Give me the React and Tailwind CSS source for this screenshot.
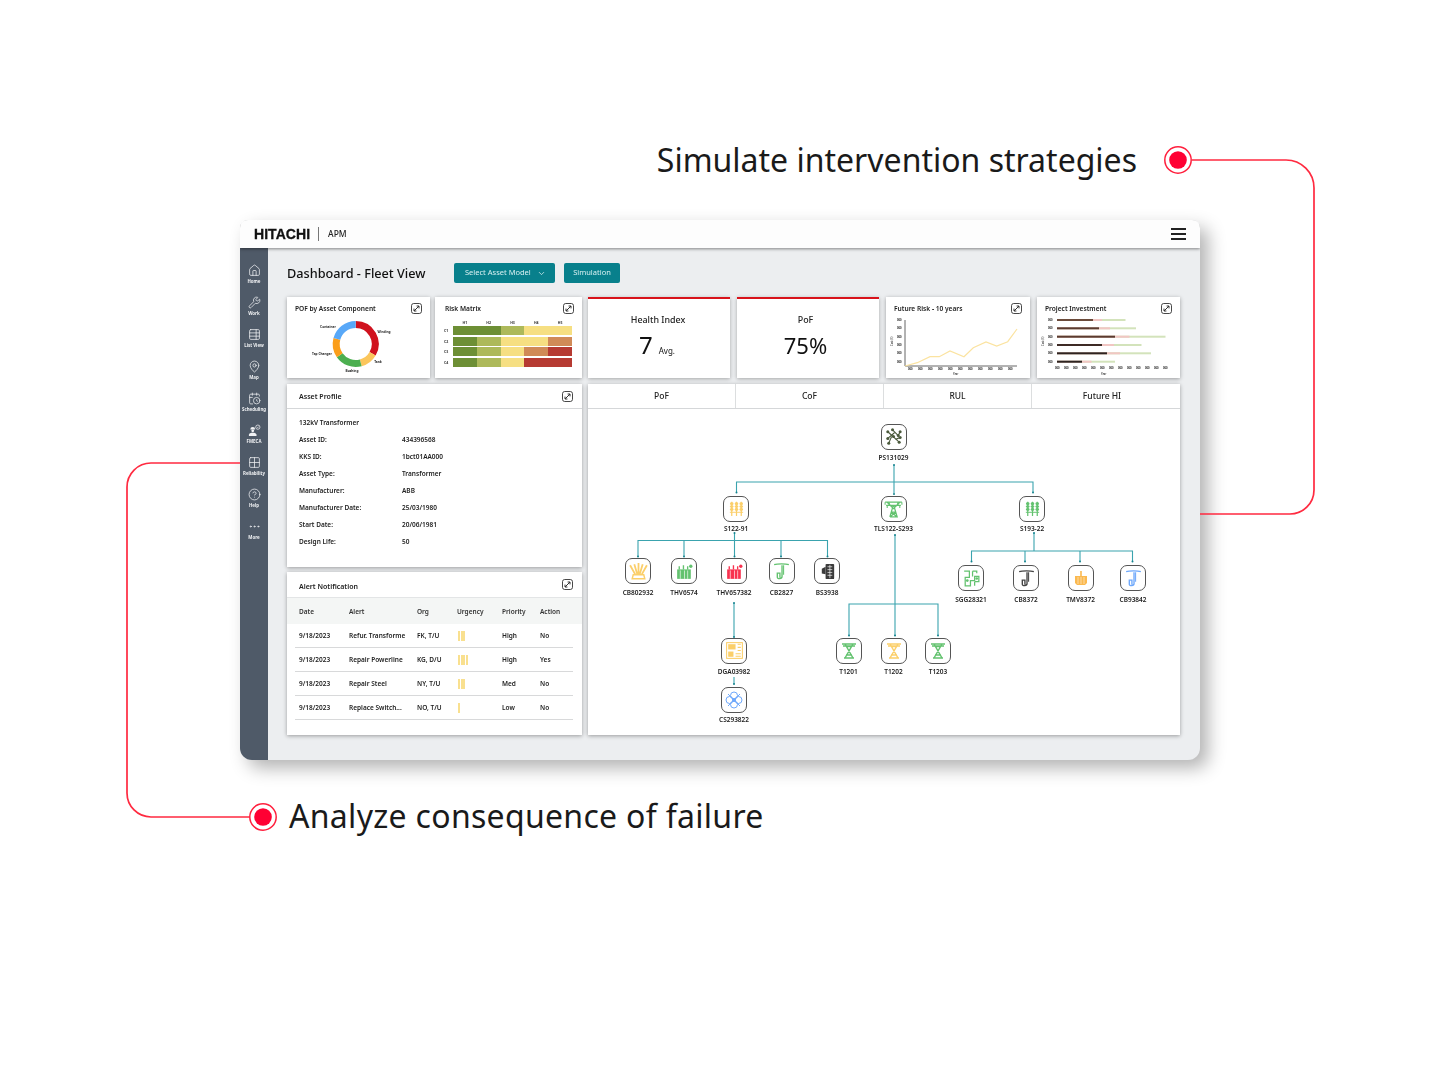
import { House, Wrench, TableProperties, MapPin, CalendarClock, Grid2x2, CircleHelp, Ellipsis, ChevronDown } from 'lucide-react'

function FmecaIcon({ size }) {
  return (
    <svg width={size} height={size} viewBox="0 0 14 14" fill="currentColor">
      <path d="M2.5 5.8A2.6 2.6 0 0 1 7.7 5.8Z" />
      <circle cx="5.1" cy="7.4" r="1.5" />
      <path d="M1 13V11.6C1 10 3 9.4 5.1 9.4S9.2 10 9.2 11.6V13Z" />
      <circle cx="10.6" cy="3.4" r="2.3" fill="none" stroke="currentColor" strokeWidth="0.8" />
      <path d="M9.7 3.4L10.4 4.1L11.5 2.8" fill="none" stroke="currentColor" strokeWidth="0.7" />
    </svg>
  )
}

const NAV = [
  { label: 'Home', icon: House },
  { label: 'Work', icon: Wrench },
  { label: 'List View', icon: TableProperties },
  { label: 'Map', icon: MapPin },
  { label: 'Scheduling', icon: CalendarClock },
  { label: 'FMECA', icon: FmecaIcon },
  { label: 'Reliability', icon: Grid2x2 },
  { label: 'Help', icon: CircleHelp },
  { label: 'More', icon: Ellipsis },
]

const PROFILE = [
  ['Asset ID:', '434396568'],
  ['KKS ID:', '1bct01AA000'],
  ['Asset Type:', 'Transformer'],
  ['Manufacturer:', 'ABB'],
  ['Manufacturer Date:', '25/03/1980'],
  ['Start Date:', '20/06/1981'],
  ['Design Life:', '50'],
]

const ALERTS = [
  { date: '9/18/2023', alert: 'Refur. Transforme', org: 'FK, T/U', urgency: 3, priority: 'High', action: 'No' },
  { date: '9/18/2023', alert: 'Repair Powerline', org: 'KG, D/U', urgency: 4, priority: 'High', action: 'Yes' },
  { date: '9/18/2023', alert: 'Repair Steel', org: 'NY, T/U', urgency: 3, priority: 'Med', action: 'No' },
  { date: '9/18/2023', alert: 'Replace Switch...', org: 'NO, T/U', urgency: 1, priority: 'Low', action: 'No' },
]

const RISK = [
  ['#6d8f35', '#6d8f35', '#adb95a', '#f6df82', '#f6df82'],
  ['#6d8f35', '#adb95a', '#f6df82', '#f6df82', '#d08a57'],
  ['#6d8f35', '#adb95a', '#f6df82', '#d08a57', '#b63a32'],
  ['#6d8f35', '#adb95a', '#f6df82', '#b63a32', '#b63a32'],
]

const TREE = [
  { id: 'PS131029', x: 893.5, y: 436.5, ly: 457.5, kind: 'network', color: '#4b5a3c' },
  { id: 'S122-91', x: 736, y: 508.5, ly: 528.5, kind: 'substation', color: '#fbcf6a' },
  { id: 'TLS122-S293', x: 893.5, y: 508.5, ly: 528.5, kind: 'pylon', color: '#63c26f' },
  { id: 'S193-22', x: 1032, y: 508.5, ly: 528.5, kind: 'substation', color: '#63c26f' },
  { id: 'CB802932', x: 638, y: 571, ly: 592.5, kind: 'crown', color: '#fbcf6a' },
  { id: 'THV6574', x: 684, y: 571, ly: 592.5, kind: 'transformer', color: '#63c26f' },
  { id: 'THV657382', x: 734, y: 571, ly: 592.5, kind: 'transformer', color: '#f8324f' },
  { id: 'CB82827', label: 'CB2827', x: 781.5, y: 571, ly: 592.5, kind: 'breaker', color: '#63c26f' },
  { id: 'BS3938', x: 827, y: 571, ly: 592.5, kind: 'building', color: '#3b3b3b' },
  { id: 'SGG28321', x: 971, y: 578, ly: 599.5, kind: 'circuit', color: '#63c26f' },
  { id: 'CB8372', x: 1026, y: 578, ly: 599.5, kind: 'breaker', color: '#444444' },
  { id: 'TMV8372', x: 1080.5, y: 578, ly: 599.5, kind: 'tank', color: '#fbb94f' },
  { id: 'CB93842', x: 1133, y: 578, ly: 599.5, kind: 'breaker', color: '#6ea8fb' },
  { id: 'DGA03982', x: 734, y: 650.5, ly: 671.5, kind: 'panel', color: '#fbcf6a' },
  { id: 'CS293822', x: 734, y: 699.5, ly: 719.5, kind: 'flower', color: '#6ea8fb' },
  { id: 'T1201', x: 848.5, y: 650.5, ly: 671.5, kind: 'tower', color: '#63c26f' },
  { id: 'T1202', x: 893.5, y: 650.5, ly: 671.5, kind: 'tower', color: '#fbcf6a' },
  { id: 'T1203', x: 938, y: 650.5, ly: 671.5, kind: 'tower', color: '#63c26f' },
]

// page coordinates, the svg viewBox below starts at the panel's corner
const LINKS = [
  'M894 465V493', 'M736.5 492V482H1033V492',
  'M734.5 533V556', 'M638 556V540.5H827.5V556', 'M684 540.5V556', 'M781 540.5V556',
  'M895 535V636', 'M849 635V604H938V635',
  'M1034 533V551', 'M971.5 561V551H1132.5V561', 'M1025 551V561', 'M1080 551V561',
  'M734 603V637', 'M734 677V684',
]

const DOTS = [
  [894, 465], [894, 494], [736.5, 492.5], [1033, 492.5], [734.5, 533], [638, 556.5], [684, 556.5], [734.5, 556.5],
  [781, 556.5], [827.5, 556.5], [895, 535], [849, 635.5], [895, 635.5], [938, 635.5], [1034, 533], [971.5, 561.5],
  [1025, 561.5], [1080, 561.5], [1132.5, 561.5], [734, 603], [734, 637], [734, 684],
]

const RISK_LINE = '905,366 917.3,362.7 930,356.7 939.3,356.7 950,351 964,356.7 973.3,347.7 986,342 996.7,346 1007.7,341.7 1017,329'

const INVEST = [
  { y: 320, dark: 1093, pink: 1102, green: 1125.5, fill: '#6b4a3a' },
  { y: 328.3, dark: 1099, pink: 1110, green: 1136, fill: '#5a3b30' },
  { y: 336.7, dark: 1115, pink: 1129.5, green: 1165.5, fill: '#5a3b30' },
  { y: 345, dark: 1102, pink: 1114, green: 1141.5, fill: '#3d2a25' },
  { y: 353.3, dark: 1107, pink: 1120, green: 1151, fill: '#2e2421' },
  { y: 361.7, dark: 1082, pink: 1091.5, green: 1115, fill: '#2e2421' },
]

function ExpandIcon() {
  return (
    <svg width="11" height="11" viewBox="0 0 11 11" fill="none" stroke="#333" className="shrink-0">
      <rect x="0.5" y="0.5" width="10" height="10" rx="2.2" strokeWidth="0.9" />
      <path d="M3 8L8 3M5.6 3H8V5.4M3 5.6V8H5.4" strokeWidth="1" />
    </svg>
  )
}

function NodeIcon({ kind, color }) {
  const line = { stroke: color, strokeWidth: 1, fill: 'none' }
  switch (kind) {
    case 'network':
      return (
        <svg viewBox="0 0 20 20" className="w-[19px] h-[19px]">
          <path d="M4 5L16 16M4 12L11 6M9 3L15 9M8 10L5 17M15 9L17 5M12 13L17 11" stroke={color} strokeWidth="1.2" />
          {[[4, 5], [4, 12], [9, 3], [15, 9], [17, 5], [5, 17], [16, 16], [17, 11], [10, 10]].map(([cx, cy]) => (
            <circle key={`${cx}-${cy}`} cx={cx} cy={cy} r="1.6" fill={color} />
          ))}
        </svg>
      )
    case 'substation':
      return (
        <svg viewBox="0 0 20 20" className="w-[19px] h-[19px]">
          {[5, 10, 15].map((x) => (
            <g key={x}>
              <path d={`M${x} 3V18`} stroke={color} strokeWidth="1.3" />
              <ellipse cx={x} cy="5" rx="1.9" ry="1.5" fill={color} />
              <ellipse cx={x} cy="8" rx="1.9" ry="1.5" fill={color} />
              <ellipse cx={x} cy="11" rx="1.9" ry="1.5" fill={color} />
            </g>
          ))}
          <path d="M3 14H17" {...line} />
        </svg>
      )
    case 'pylon':
      return (
        <svg viewBox="0 0 20 20" className="w-[21px] h-[21px]">
          <path d="M2 4H18M3 7H17M4 4L10 10L16 4M6.5 18L9.5 8H10.5L13.5 18H6.5M8 13.5H12M8 13.5L13.5 18M12 13.5L6.5 18" stroke={color} strokeWidth="1.2" fill="none" />
          <path d="M2 4V6.5M6 4V6.5M14 4V6.5M18 4V6.5M4 7V9.5M16 7V9.5" {...line} />
        </svg>
      )
    case 'tower':
      return (
        <svg viewBox="0 0 20 20" className="w-[20px] h-[20px]">
          <path d="M3 3H17M4 5H16M6 3L14 17M14 3L6 17M5 17H15M7.5 5.5L12.5 5.5M7 14H13" stroke={color} strokeWidth="1.5" fill="none" />
        </svg>
      )
    case 'crown':
      return (
        <svg viewBox="0 0 20 20" className="w-[21px] h-[21px]">
          <path d="M2 4L7 13M18 4L13 13M6 3L9 13M14 3L11 13M10 2V13" stroke={color} strokeWidth="1.7" fill="none" />
          <path d="M5 13H15L16 17H4Z" fill="none" stroke={color} strokeWidth="1.4" />
        </svg>
      )
    case 'transformer':
      return (
        <svg viewBox="0 0 20 20" className="w-[21px] h-[21px]">
          <rect x="3" y="8" width="13" height="9" fill={color} />
          <path d="M5 8V5M9 8V4M13 8V5" stroke={color} strokeWidth="1.3" />
          <circle cx="16" cy="5" r="1.6" fill={color} />
          <path d="M6 9V17M10 9V17M13 9V17" stroke="#fff" strokeWidth="0.6" />
        </svg>
      )
    case 'breaker':
      return (
        <svg viewBox="0 0 20 20" className="w-[21px] h-[21px]">
          <path d="M3 3.5C6 2.5 14 2.5 17 3.5M10.5 4V15C10.5 17 6 17.5 6 15.5V11.5H8.5V16" stroke={color} strokeWidth="1.3" fill="none" />
          <path d="M12 4V13" stroke={color} strokeWidth="1" />
        </svg>
      )
    case 'building':
      return (
        <svg viewBox="0 0 20 20" className="w-[19px] h-[19px]">
          <rect x="8" y="2" width="9" height="16" rx="1" fill={color} />
          <path d="M4 7L8 5V13L4 12Z" fill={color} />
          <path d="M10 5H15M10 8H15M10 11H15M10 14H15M12.5 3V17" stroke="#fff" strokeWidth="0.7" />
        </svg>
      )
    case 'circuit':
      return (
        <svg viewBox="0 0 20 20" className="w-[21px] h-[21px]">
          <path d="M3 3H8V9H4V17H9V12H13V8H17V13H13M11 3H15V5M11 3V8M13 17V13" stroke={color} strokeWidth="1.2" fill="none" />
          <circle cx="6" cy="12" r="1.3" fill={color} />
          <circle cx="15" cy="10" r="1.3" fill={color} />
        </svg>
      )
    case 'tank':
      return (
        <svg viewBox="0 0 20 20" className="w-[20px] h-[20px]">
          <path d="M4 8H16V15L14 17H6L4 15Z" fill={color} />
          <path d="M10 3V8" stroke={color} strokeWidth="1.6" />
          <path d="M7 9V16M10 9V16M13 9V16" stroke="#fff" strokeWidth="0.5" />
        </svg>
      )
    case 'panel':
      return (
        <svg viewBox="0 0 20 20" className="w-[21px] h-[21px]">
          <rect x="2.5" y="2.5" width="15" height="15" fill="none" stroke={color} strokeWidth="1" />
          <rect x="4" y="4" width="7" height="5" fill={color} />
          <rect x="4" y="11" width="5" height="5" fill={color} />
          <path d="M13 4H16M13 7H16M13 10H16M11 13H16M11 15.5H16" stroke={color} strokeWidth="1" />
        </svg>
      )
    case 'flower':
      return (
        <svg viewBox="0 0 20 20" className="w-[20px] h-[20px]">
          <g fill="none" stroke={color} strokeWidth="1">
            <ellipse cx="10" cy="5.5" rx="3.5" ry="3.5" />
            <ellipse cx="10" cy="14.5" rx="3.5" ry="3.5" />
            <ellipse cx="5.5" cy="10" rx="3.5" ry="3.5" />
            <ellipse cx="14.5" cy="10" rx="3.5" ry="3.5" />
            <path d="M4 4L16 16M16 4L4 16" />
          </g>
          <circle cx="10" cy="10" r="2" fill={color} />
        </svg>
      )
    default:
      return null
  }
}

function TreeNode({ node }) {
  return (
    <div className="absolute flex flex-col items-center w-[70px]" style={{ left: node.x - 588 - 35, top: node.y - 409 - 13 }}>
      <div className="w-[26px] h-[26px] rounded-[7px] border border-[#555] bg-white flex items-center justify-center">
        <NodeIcon kind={node.kind} color={node.color} />
      </div>
      <div className="absolute text-[6.5px] leading-[8px] font-semibold text-[#222] whitespace-nowrap" style={{ top: node.ly - node.y + 13 - 4 }}>
        {node.label || node.id}
      </div>
    </div>
  )
}

function Card({ width, title, children }) {
  return (
    <div className="relative bg-white shadow-[0_1px_4px_rgba(0,0,0,0.35)] h-full" style={{ width }}>
      <div className="flex items-center justify-between pl-[8px] pr-[8px] pt-[6px]">
        <span className="text-[6.6px] leading-[11px] font-semibold text-[#222]">{title}</span>
        <ExpandIcon />
      </div>
      {children}
    </div>
  )
}

function StatCard({ title, className, children }) {
  return (
    <div className={`w-[142px] h-full bg-white border-t-[2px] border-[#d8131b] shadow-[0_1px_4px_rgba(0,0,0,0.3)] flex flex-col items-center ${className}`}>
      <div className="mt-[14px] text-[8.9px] leading-[14px] font-medium text-[#222]">{title}</div>
      <div className="mt-[3px] flex items-baseline text-[#111]">{children}</div>
    </div>
  )
}

function Donut() {
  const segs = [
    { color: '#d0121e', from: 0, to: 120 },
    { color: '#fbc65c', from: 120, to: 165 },
    { color: '#4caf50', from: 165, to: 235 },
    { color: '#fb9e1a', from: 235, to: 285 },
    { color: '#58a8f8', from: 285, to: 360 },
  ]
  const r = 19.5
  const pt = (a) => {
    const t = ((a - 90) * Math.PI) / 180
    return `${(68.7 + r * Math.cos(t)).toFixed(2)} ${(47 + r * Math.sin(t)).toFixed(2)}`
  }
  return (
    <svg viewBox="0 0 143 81" className="absolute inset-0 w-full h-full">
      {segs.map((s) => (
        <path key={s.color} d={`M${pt(s.from)}A${r} ${r} 0 ${s.to - s.from > 180 ? 1 : 0} 1 ${pt(s.to)}`} fill="none" stroke={s.color} strokeWidth="7" />
      ))}
      <g fontSize="3.2" fontWeight="700" fill="#222" textAnchor="middle">
        <text x="41" y="31">Container</text>
        <text x="97" y="36">Winding</text>
        <text x="35" y="57.5">Tap Changer</text>
        <text x="91" y="66">Tank</text>
        <text x="65" y="74.5">Bushing</text>
      </g>
    </svg>
  )
}

function RiskChart() {
  const ys = [320, 328.3, 336.7, 345, 353.3, 361.7]
  const xs = [908, 918, 928, 938, 948, 958, 968, 978, 988, 998, 1008]
  return (
    <svg viewBox="886 297 144 81" className="absolute inset-0 w-full h-full">
      <path d="M905 320V366H1017" fill="none" stroke="#555" strokeWidth="0.9" />
      <polyline points={RISK_LINE} fill="none" stroke="#fbe3a0" strokeWidth="1.2" />
      <g fontSize="2.6" fontWeight="700" fill="#222">
        {ys.map((y) => <text key={y} x="897" y={y + 1}>000</text>)}
        {xs.map((x) => <text key={x} x={x} y="370">000</text>)}
        <text x="953" y="375" fontWeight="500">Year</text>
        <text x="0" y="0" fontWeight="500" transform="translate(893 346) rotate(-90)">Cost ($)</text>
      </g>
    </svg>
  )
}

function InvestChart() {
  const xs = [1057, 1066, 1075, 1084, 1093, 1102, 1111, 1120, 1129, 1138, 1147, 1156, 1165]
  return (
    <svg viewBox="1037 297 143 81" className="absolute inset-0 w-full h-full">
      {INVEST.map((b) => (
        <g key={b.y}>
          <rect x="1057" y={b.y - 1} width={b.green - 1057} height="2" fill="#d3e3bb" />
          <rect x="1057" y={b.y - 1} width={b.pink - 1057} height="2" fill="#f1c6c3" />
          <rect x="1057" y={b.y - 1} width={b.dark - 1057} height="2" fill={b.fill} />
        </g>
      ))}
      <g fontSize="2.6" fontWeight="700" fill="#222">
        {INVEST.map((b) => <text key={b.y} x="1048" y={b.y + 1}>000</text>)}
        {xs.map((x) => <text key={x} x={x - 2} y="369">000</text>)}
        <text x="1101" y="375" fontWeight="500">Year</text>
        <text x="0" y="0" fontWeight="500" transform="translate(1044 346) rotate(-90)">Cost ($)</text>
      </g>
    </svg>
  )
}

function Callouts() {
  const dot = (cx, cy) => (
    <g>
      <circle cx={cx} cy={cy} r="13.2" fill="#fff" stroke="#ff1f3d" strokeWidth="1.5" />
      <circle cx={cx} cy={cy} r="8.8" fill="#ff0033" />
    </g>
  )
  return (
    <svg viewBox="0 0 1440 1080" className="absolute inset-0 w-full h-full pointer-events-none" fill="none">
      <path d="M1192 160H1286A28 28 0 0 1 1314 188V490A24 24 0 0 1 1290 514H1200" stroke="#ff2a40" strokeWidth="1.7" />
      <path d="M240 463H151A24 24 0 0 0 127 487V793A24 24 0 0 0 151 817H250" stroke="#ff2a40" strokeWidth="1.7" />
      {dot(1178, 160)}
      {dot(263, 817)}
    </svg>
  )
}

export default function App() {
  return (
    <div className="relative w-[1440px] h-[1080px] bg-white overflow-hidden font-['Noto_Sans',sans-serif]">
      <h2 className="pt-[140px] pr-[303px] text-right text-[32px] leading-[40px] font-normal text-[#1a1a1a]">
        Simulate intervention strategies
      </h2>

      <div className="mt-[40px] ml-[240px] w-[960px] h-[540px] rounded-t-[8px] rounded-b-[12px] overflow-hidden bg-[#eceef0] shadow-[8px_8px_18px_rgba(0,0,0,0.3)] flex flex-col blur-[0.3px]">
        <header className="relative z-10 h-[28px] shrink-0 bg-[#fdfdfd] shadow-[0_1px_3px_rgba(0,0,0,0.45)] flex items-center pl-[14px] pr-[14px]">
          <span className="font-['Liberation_Sans',sans-serif] font-black text-[14px] tracking-[0.05px] text-[#111] [-webkit-text-stroke:0.3px_#111]">HITACHI</span>
          <span className="ml-[8px] w-px h-[14px] bg-[#777]" />
          <span className="ml-[9px] text-[8.5px] font-medium text-[#222]">APM</span>
          <span className="ml-auto flex flex-col gap-[3px]">
            <span className="block w-[15px] h-[2px] bg-[#222]" />
            <span className="block w-[15px] h-[2px] bg-[#222]" />
            <span className="block w-[15px] h-[2px] bg-[#222]" />
          </span>
        </header>

        <div className="flex flex-1">
          <nav className="w-[28px] shrink-0 bg-[#4f5a68] pt-[16px] flex flex-col">
            {NAV.map((item) => (
              <div key={item.label} className="h-[32px] flex flex-col items-center text-[#f1f2f4]">
                <item.icon size={13} strokeWidth={1.4} />
                <span className="mt-[0.5px] text-[4.4px] leading-[6px] font-bold whitespace-nowrap">{item.label}</span>
              </div>
            ))}
          </nav>

          <main className="flex-1 pl-[19px]">
            <div className="mt-[15px] mb-[14px] h-[20px] flex items-center">
              <h1 className="w-[167px] pt-[1px] text-[12.7px] font-medium text-[#111] whitespace-nowrap">Dashboard - Fleet View</h1>
              <button className="w-[101px] h-[20px] rounded-[2px] bg-[#08808c] text-[#d9f0f2] text-[7.5px] flex items-center pl-[11px]">
                Select Asset Model
                <ChevronDown size={9} className="ml-[6px]" />
              </button>
              <button className="ml-[9px] w-[56px] h-[20px] rounded-[2px] bg-[#08808c] text-[#d9f0f2] text-[7.5px]">
                Simulation
              </button>
            </div>

            <div className="h-[81px] flex">
              <Card width={143} title="POF by Asset Component"><Donut /></Card>
              <div className="ml-[5px] h-full">
                <Card width={147} title={<span className="ml-[2px]">Risk Matrix</span>}>
                  <div className="relative ml-[18px] mr-[10px] mt-[5px]">
                    <div className="grid grid-cols-5 h-[7px] text-[3.5px] leading-[7px] font-bold text-[#333] text-center">
                      {['H1', 'H2', 'H3', 'H4', 'H5'].map((c) => <span key={c}>{c}</span>)}
                    </div>
                    <div className="flex flex-col gap-[1.5px]">
                      {RISK.map((row, i) => (
                        <div key={i} className="relative grid grid-cols-5 h-[9px]">
                          <span className="absolute left-[-9px] text-[3.5px] leading-[9px] font-bold text-[#333]">{`C${i + 1}`}</span>
                          {row.map((c, j) => <span key={j} style={{ background: c }} />)}
                        </div>
                      ))}
                    </div>
                  </div>
                </Card>
              </div>
              <div className="ml-[6px] h-full">
                <StatCard title="Health Index" className="pr-[2px]">
                  <span className="text-[24px] leading-[30px] -ml-[2px]">7</span>
                  <span className="ml-[6px] text-[8px]">Avg.</span>
                </StatCard>
              </div>
              <div className="ml-[7px] h-full">
                <StatCard title="PoF" className="pr-[5px]">
                  <span className="text-[22px] leading-[30px]">75%</span>
                </StatCard>
              </div>
              <div className="ml-[7px] h-full"><Card width={144} title="Future Risk - 10 years"><RiskChart /></Card></div>
              <div className="ml-[7px] h-full"><Card width={143} title="Project Investment"><InvestChart /></Card></div>
            </div>

            <div className="mt-[6px] h-[351px] flex">
              <div className="w-[295px] flex flex-col gap-[5px]">
                <section className="h-[183px] bg-white shadow-[0_1px_4px_rgba(0,0,0,0.35)]">
                  <div className="h-[25px] border-b border-[#d5d7d9] flex items-center justify-between pl-[12px] pr-[9px]">
                    <span className="text-[7px] font-semibold text-[#222] pt-[2px]">Asset Profile</span>
                    <ExpandIcon />
                  </div>
                  <div className="pl-[12px] pt-[5px] text-[6.5px] font-semibold text-[#222]">
                    <div className="h-[17px] leading-[17px]">132kV Transformer</div>
                    {PROFILE.map(([k, v]) => (
                      <div key={k} className="h-[17px] leading-[17px] flex">
                        <span className="w-[103px]">{k}</span>
                        <span>{v}</span>
                      </div>
                    ))}
                  </div>
                </section>

                <section className="h-[163px] bg-white shadow-[0_1px_4px_rgba(0,0,0,0.35)]">
                  <div className="h-[26px] border-b border-[#e3e5e6] flex items-center justify-between pl-[12px] pr-[9px]">
                    <span className="text-[7px] font-semibold text-[#222] pt-[5px]">Alert Notification</span>
                    <ExpandIcon />
                  </div>
                  <div className="h-[26px] bg-[#f4f6f5] pl-[12px] pt-[2px] grid grid-cols-[50px_68px_40px_45px_38px_1fr] items-center text-[6.5px] font-semibold text-[#333]">
                    <span>Date</span><span>Alert</span><span>Org</span><span>Urgency</span><span>Priority</span><span>Action</span>
                  </div>
                  <div className="ml-[8px] w-[278px]">
                    {ALERTS.map((a) => (
                      <div key={a.alert} className="h-[24px] border-b border-[#d8d9da] pl-[4px] pt-[1px] grid grid-cols-[50px_68px_40px_45px_38px_1fr] items-center text-[6.5px] font-semibold text-[#222]">
                        <span>{a.date}</span>
                        <span className="whitespace-nowrap">{a.alert}</span>
                        <span>{a.org}</span>
                        <span className="flex gap-[0.5px] pl-[1px]">
                          {Array.from({ length: a.urgency }).map((_, i) => <span key={i} className="block w-[2px] h-[10px] bg-[#f9e08f]" />)}
                        </span>
                        <span>{a.priority}</span>
                        <span>{a.action}</span>
                      </div>
                    ))}
                  </div>
                </section>
              </div>

              <section className="ml-[6px] w-[592px] bg-white shadow-[0_1px_4px_rgba(0,0,0,0.35)] flex flex-col">
                <div className="h-[25px] border-b border-[#d5d7d9] grid grid-cols-4 text-[8.5px] font-medium text-[#222]">
                  <div className="flex items-center justify-center pt-[1px] border-r border-[#dcdedf]">PoF</div>
                  <div className="flex items-center justify-center pt-[1px] border-r border-[#dcdedf]">CoF</div>
                  <div className="flex items-center justify-center pt-[1px] border-r border-[#dcdedf]">RUL</div>
                  <div className="flex items-center justify-center pt-[1px] pr-[8px]">Future HI</div>
                </div>
                <div className="relative flex-1">
                  <svg viewBox="588 409 592 326" className="absolute inset-0 w-full h-full" fill="none">
                    {LINKS.map((d) => <path key={d} d={d} stroke="#3aa3ae" strokeWidth="1.1" />)}
                    {DOTS.map(([cx, cy]) => <circle key={`${cx}-${cy}`} cx={cx} cy={cy} r="1" fill="#14838f" />)}
                  </svg>
                  {TREE.map((n) => <TreeNode key={n.id} node={n} />)}
                </div>
              </section>
            </div>
          </main>
        </div>
      </div>

      <h2 className="mt-[36px] pl-[289px] text-[32px] leading-[40px] tracking-[0.3px] font-normal text-[#1a1a1a]">
        Analyze consequence of failure
      </h2>

      <Callouts />
    </div>
  )
}
